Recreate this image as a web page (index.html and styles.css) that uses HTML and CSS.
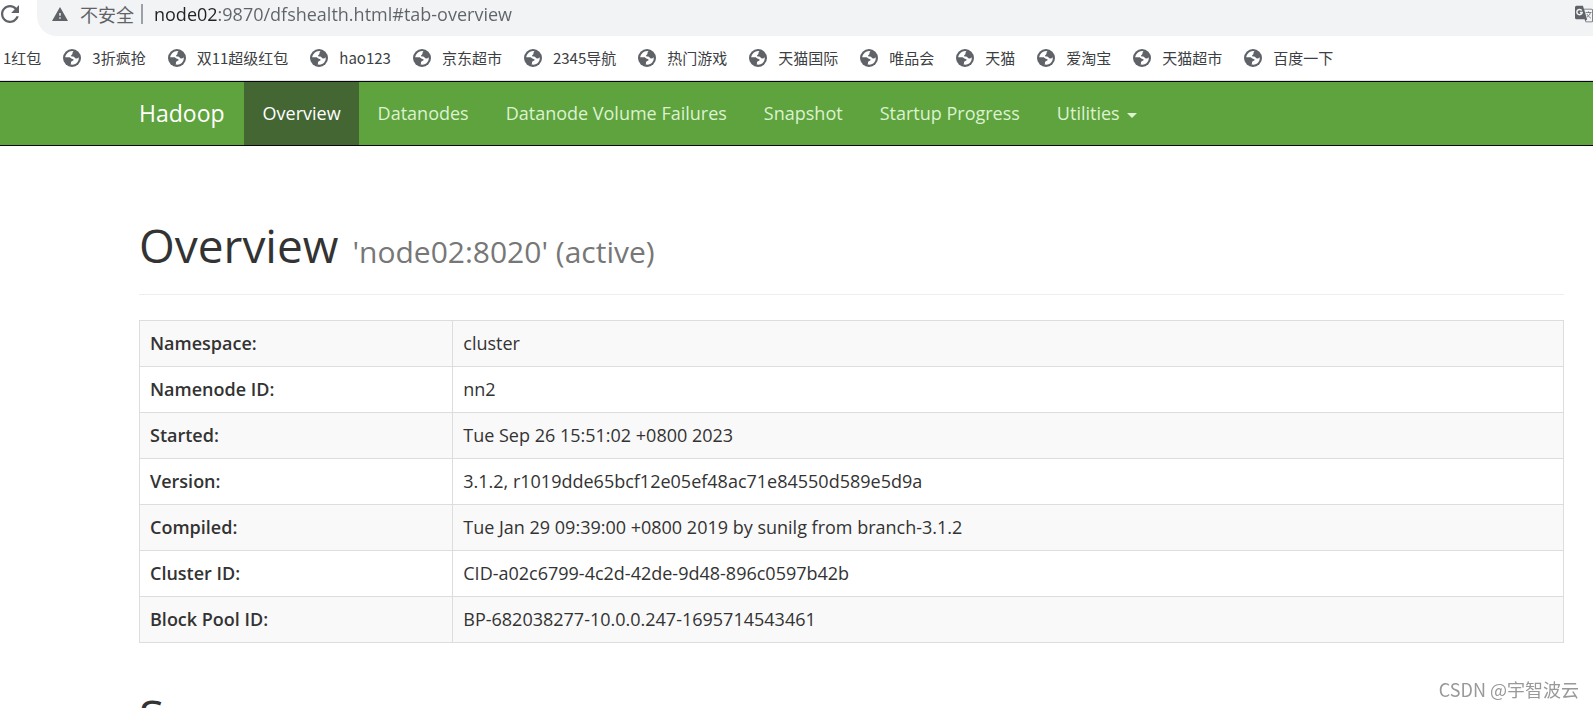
FILE: index.html
```html
<!DOCTYPE html>
<html lang="en">
<head>
<meta charset="utf-8">
<title>Namenode information</title>
<link rel="stylesheet" href="styles.css">
</head>
<body>
<svg class="sprite" aria-hidden="true">
  <symbol id="globe" viewBox="0 0 18 18"><circle cx="9" cy="9" r="9"/><path fill="#fff" d="M10.500 2.200C8 1.800 4.800 3 3.200 5.500 2.500 6.500 2.200 7.500 2.200 8.300H6c1.200 0 1.500.7 2.300 1.300.8.500 2.200.2 2.300 1.200.1 1.200-1.800 1-2.400 1.900-.5.800.1 1.700-.6 2.900 2.800.6 5.400-.5 6.900-2.600 1.100-1.500 1.400-3.200 1.200-4.800-.8.900-1.500 1.300-2.600 1.200-1.300-.1-1.300-1.400-2.300-1.700-1-.3-2.300.2-2.700-.7-.4-1.100 1-1.200 1.300-2.100.3-1-.1-1.900 1.100-2.700z"/></symbol>
</svg>

<header class="browser">
  <div class="toolbar">
    <button class="reload" type="button" aria-label="Reload">
      <svg viewBox="4 4 16 16"><path d="M17.65 6.35C16.2 4.9 14.21 4 12 4c-4.42 0-7.99 3.58-7.99 8s3.57 8 7.99 8c3.73 0 6.84-2.55 7.73-6h-2.08c-.82 2.33-3.04 4-5.65 4-3.31 0-6-2.69-6-6s2.69-6 6-6c1.66 0 3.14.69 4.22 1.78L13 11h7V4l-2.35 2.35z"/></svg>
    </button>
    <div class="omnibox">
      <button class="site-info" type="button">
        <svg viewBox="1 2 22 19"><path d="M1 21h22L12 2 1 21zm12-3h-2v-2h2v2zm0-4h-2v-4h2v4z"/></svg>
        <span lang="zh-CN">不安全</span>
      </button>
      <input class="url" type="text" aria-label="Address" value="node02:9870/dfshealth.html#tab-overview">
      <button class="translate" type="button" aria-label="Translate">
        <svg viewBox="0 0 24 24"><path fill-rule="evenodd" d="M2 1h8.6l1.2 4H22a2 2 0 0 1 2 2v14a2 2 0 0 1-2 2h-8l-1.2-4H2a2 2 0 0 1-2-2V3a2 2 0 0 1 2-2zm10.2 5 3.9 13-2.4 3H22a1 1 0 0 0 1-1V7a1 1 0 0 0-1-1z"/><path class="mark-g" d="M9 7.500A3.500 3.500 0 1 0 9.500 10H6.500"/><path class="mark-x" d="M14 10h8M18 8.500v1.500M20.500 10c-.5 3-2.500 5-4.500 6M16 12c1 2 3 4 5 5.500"/></svg>
      </button>
    </div>
  </div>
  <nav class="bookmarks" aria-label="Bookmarks" lang="zh-CN">
    <a href="#">1红包</a>
    <a href="#"><svg><use href="#globe"/></svg>3折疯抢</a>
    <a href="#"><svg><use href="#globe"/></svg>双11超级红包</a>
    <a href="#"><svg><use href="#globe"/></svg>hao123</a>
    <a href="#"><svg><use href="#globe"/></svg>京东超市</a>
    <a href="#"><svg><use href="#globe"/></svg>2345导航</a>
    <a href="#"><svg><use href="#globe"/></svg>热门游戏</a>
    <a href="#"><svg><use href="#globe"/></svg>天猫国际</a>
    <a href="#"><svg><use href="#globe"/></svg>唯品会</a>
    <a href="#"><svg><use href="#globe"/></svg>天猫</a>
    <a href="#"><svg><use href="#globe"/></svg>爱淘宝</a>
    <a href="#"><svg><use href="#globe"/></svg>天猫超市</a>
    <a href="#"><svg><use href="#globe"/></svg>百度一下</a>
  </nav>
</header>

<nav class="navbar" aria-label="Main">
  <a class="brand" href="#">Hadoop</a>
  <a class="tab active" href="#tab-overview">Overview</a>
  <a class="tab" href="#tab-datanode">Datanodes</a>
  <a class="tab" href="#tab-volume-failures">Datanode Volume Failures</a>
  <a class="tab" href="#tab-snapshot">Snapshot</a>
  <a class="tab" href="#tab-startup">Startup Progress</a>
  <a class="tab" href="#utilities">Utilities<span class="caret"></span></a>
</nav>

<main class="content">
  <div class="page-header">
    <h1>Overview <small>'node02:8020' (active)</small></h1>
  </div>
  <table class="info">
    <tr><th scope="row">Namespace:</th><td>cluster</td></tr>
    <tr><th scope="row">Namenode ID:</th><td>nn2</td></tr>
    <tr><th scope="row">Started:</th><td>Tue Sep 26 15:51:02 +0800 2023</td></tr>
    <tr><th scope="row">Version:</th><td>3.1.2, r1019dde65bcf12e05ef48ac71e84550d589e5d9a</td></tr>
    <tr><th scope="row">Compiled:</th><td>Tue Jan 29 09:39:00 +0800 2019 by sunilg from branch-3.1.2</td></tr>
    <tr><th scope="row">Cluster ID:</th><td>CID-a02c6799-4c2d-42de-9d48-896c0597b42b</td></tr>
    <tr><th scope="row">Block Pool ID:</th><td>BP-682038277-10.0.0.247-1695714543461</td></tr>
  </table>
  <div class="page-header">
    <h1>Summary</h1>
  </div>
</main>

<div class="watermark" lang="zh-CN">CSDN @宇智波云</div>
</body>
</html>
```

FILE: styles.css
```css
* { box-sizing: border-box; }

html { overflow: hidden; }

body {
  margin: 0;
  height: 100vh;
  overflow: hidden;
  background: #fff;
  color: #333;
  font: 18px/25px "Open Sans", "Noto Sans CJK SC", sans-serif;
}

a { color: inherit; text-decoration: none; }

button {
  border: 0;
  padding: 0;
  background: none;
  font: inherit;
  color: #5f6368;
}

svg { display: block; fill: #5f6368; }

.sprite { position: absolute; width: 0; height: 0; }

/* browser chrome */
.browser { border-bottom: 1px solid #dee1e6; }

.toolbar { display: flex; height: 36px; gap: 18px; }

.reload { padding: 0 0 8px 1px; }
.reload svg { width: 18px; height: 18px; }

.omnibox {
  flex: 1;
  display: flex;
  align-items: center;
  padding: 0 0 8px 15px;
  background: #f1f3f4;
  border-radius: 0 0 0 20px;
}

.site-info {
  display: flex;
  align-items: center;
  gap: 12px;
  padding-right: 7px;
  border-right: 2px solid #9aa0a6;
  font: 18px/20px "Noto Sans CJK SC", sans-serif;
}
.site-info svg { width: 16px; height: 14px; }

.url {
  flex: 1;
  height: 28px;
  padding: 0;
  margin-left: 11px;
  border: 0;
  color: #5f6368;
  font: 18px/28px "Open Sans", sans-serif;
  background: linear-gradient(90deg, #202124 64px, #5f6368 64px) text;
  -webkit-text-fill-color: transparent;
}

.translate svg { width: 18px; height: 18px; }
.mark-g { fill: none; stroke: #f1f3f4; stroke-width: 2; }
.mark-x { fill: none; stroke: #5f6368; stroke-width: 1; }

.bookmarks {
  display: flex;
  align-items: center;
  gap: 22px;
  height: 44px;
  padding-left: 3px;
  font: 15px/20px "Noto Sans CJK SC", sans-serif;
  color: #3c4043;
  white-space: nowrap;
}
.bookmarks a { display: flex; align-items: center; gap: 11px; }
.bookmarks svg { width: 18px; height: 18px; }

/* page navigation */
.navbar {
  display: flex;
  padding-left: 120px;
  background: #5fa33e;
  border: solid #080808;
  border-width: 1px 0;
  line-height: 63px;
  white-space: nowrap;
}
.brand { padding: 0 19px; font-size: 23px; color: #fff; }
.tab { padding: 0 18px 0 19px; color: #dcf2d0; }
.tab.active { background: #446633; color: #fff; }

.caret {
  display: inline-block;
  margin-left: 7px;
  vertical-align: middle;
  border: solid transparent;
  border-width: 5px 5px 0;
  border-top-color: #dcf2d0;
}

/* overview */
.content { padding: 71px 29px 0 139px; }

.page-header {
  padding-bottom: 14px;
  margin-bottom: 25px;
  border-bottom: 1px solid #eee;
}
h1 { margin: 0; font-size: 46px; font-weight: 400; line-height: 56px; }
h1 small { margin-left: 2px; font-size: 30px; color: #777; }

.info {
  width: 100%;
  margin-bottom: 45px;
  border-collapse: collapse;
  table-layout: fixed;
}
.info th, .info td {
  padding: 10px;
  border: 1px solid #ddd;
  text-align: left;
}
.info th { width: 22%; font-weight: 600; }
.info tr:nth-child(odd) { background: #f9f9f9; }

.watermark {
  position: fixed;
  right: 14px;
  bottom: 7px;
  font: 18px/24px "Noto Sans CJK SC", sans-serif;
  color: #999;
}
```
